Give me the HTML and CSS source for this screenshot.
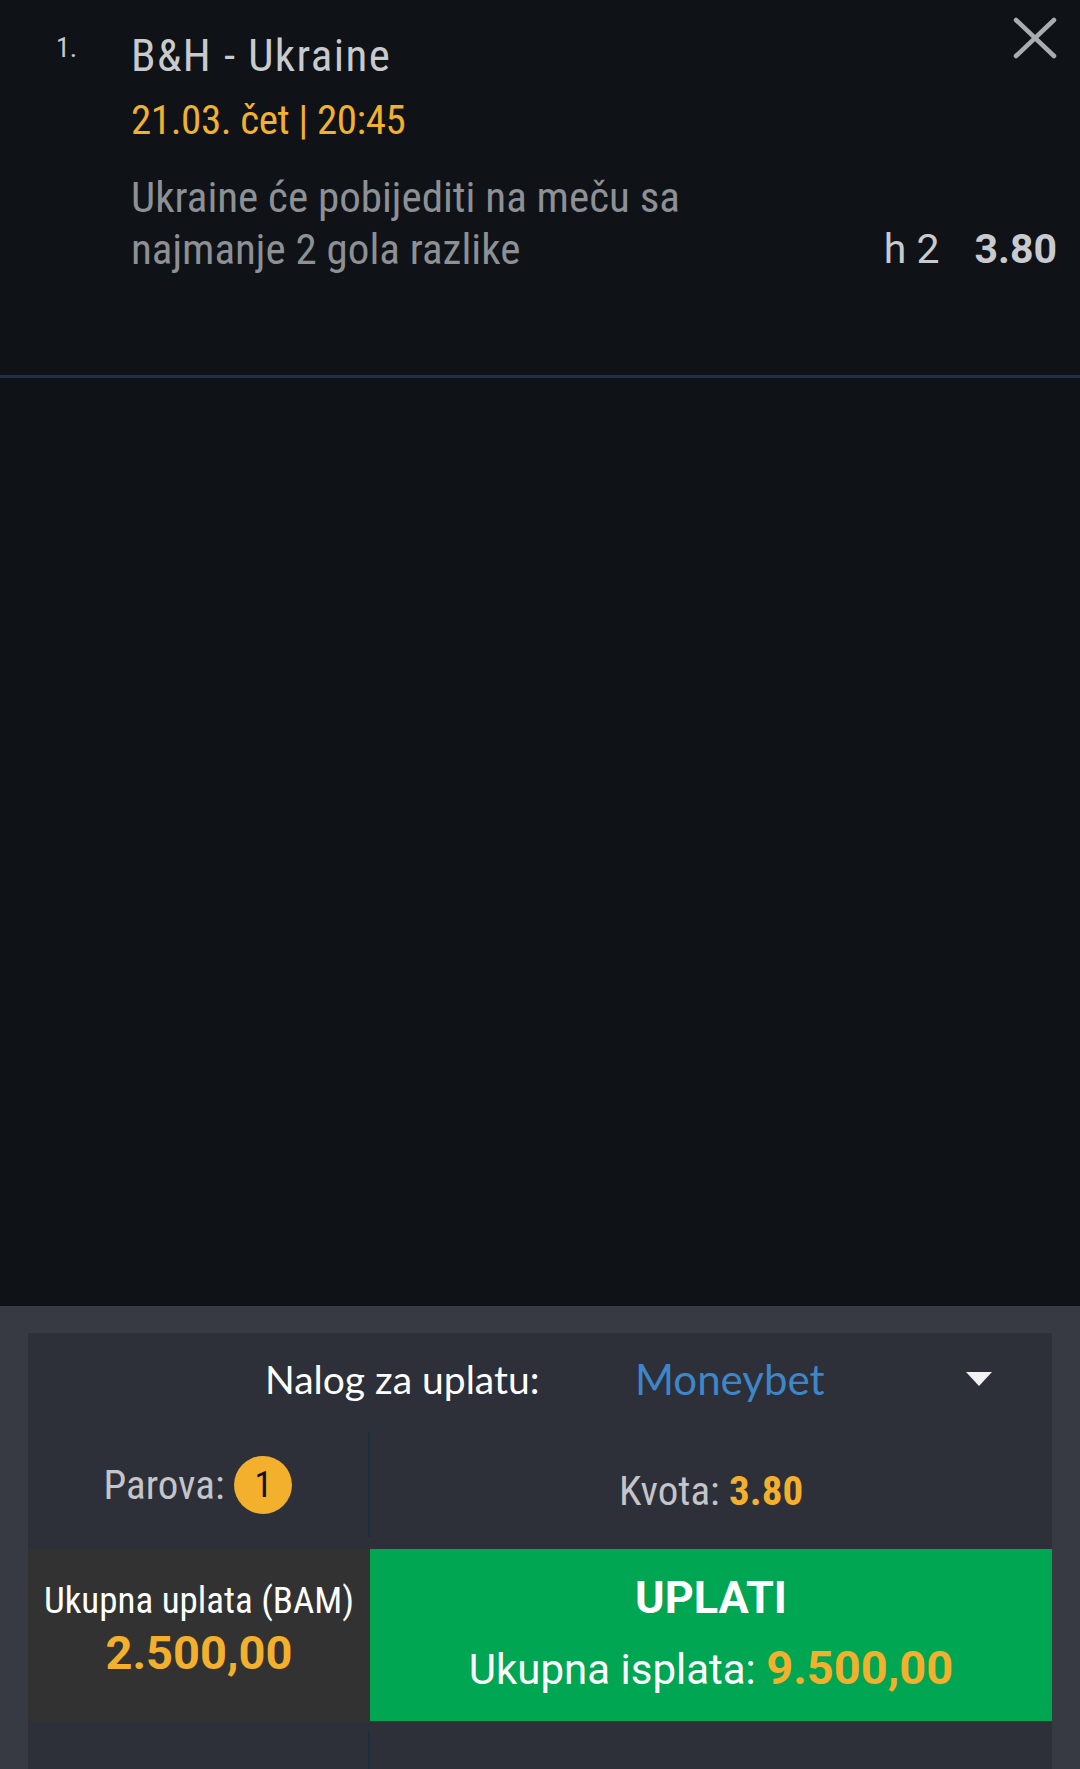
FILE: index.html
```html
<!DOCTYPE html>
<html lang="bs">
<head>
    <meta charset="UTF-8" />
    <meta name="viewport" content="width=device-width, initial-scale=1.0"/>
    <title>Listić</title>
    <link rel="stylesheet" href="styles.css">
</head>
<body>

    <!-- Selected match -->
    <div class="bet">
        <div class="bet-num">1.</div>
        <div class="bet-info">
            <div class="bet-head">
                <div class="bet-title">B&amp;H - Ukraine</div>
                <button class="bet-close" aria-label="Ukloni">
                    <svg width="44" height="42" viewBox="0 0 44 42">
                        <path d="M3 3 L41 39 M41 3 L3 39" stroke="#a9acb0" stroke-width="4.5" stroke-linecap="round"/>
                    </svg>
                </button>
            </div>
            <div class="bet-date">21.03. čet | 20:45</div>
            <div class="bet-row">
                <div class="bet-desc">Ukraine će pobijediti na meču sa najmanje 2 gola razlike</div>
                <div class="bet-odd"><span class="bet-type">h 2</span><span class="bet-value">3.80</span></div>
            </div>
        </div>
    </div>

    <div class="spacer"></div>

    <!-- Ticket panel -->
    <div class="slip">
        <div class="card">
            <div class="account">
                <span class="account-label">Nalog za uplatu:</span>
                <span class="account-value">Moneybet</span>
                <span class="account-arrow"></span>
            </div>

            <div class="stats">
                <div class="cell">Parova: <span class="badge">1</span></div>
                <div class="cell">Kvota:&nbsp;<b class="yellow">3.80</b></div>
            </div>

            <div class="pay">
                <div class="stake">
                    <div class="stake-label">Ukupna uplata (BAM)</div>
                    <div class="stake-value">2.500,00</div>
                </div>
                <button class="submit">
                    <span class="submit-title">UPLATI</span>
                    <span class="submit-win">Ukupna isplata: <b class="amount">9.500,00</b></span>
                </button>
            </div>

            <div class="stats stats-empty">
                <div class="cell"></div>
                <div class="cell"></div>
            </div>
        </div>
    </div>

</body>
</html>
```

FILE: styles.css
```css
:root {
    --bg: #0f1317;
    --panel: #373a43;
    --card: #2d3039;
    --line: #1b2d40;
    --yellow: #f2b02c;
    --green: #00a651;
    --narrow: "Roboto Condensed", Roboto, "Liberation Sans", sans-serif;
    --wide: Roboto, "Liberation Sans", sans-serif;
}

* {
    box-sizing: border-box;
}

body {
    margin: 0;
    height: 1769px;
    overflow: hidden;
    background: var(--bg);
    font-family: var(--narrow);
    font-stretch: 80%;
    display: flex;
    flex-direction: column;
}

/* match row */
.bet {
    display: flex;
    height: 378px;
    padding: 17px 23px 0 56px;
    border-bottom: 3px solid #18324a;
    color: #c8cacd;
}

.bet-num {
    width: 75px;
    font-size: 28px;
    padding-top: 14px;
}

.bet-info {
    flex: 1;
}

.bet-head {
    display: flex;
    justify-content: space-between;
    align-items: flex-start;
}

.bet-title {
    font-size: 45px;
    line-height: 58px;
    margin-top: 10px;
    letter-spacing: 1.4px;
}

.bet-date {
    color: var(--yellow);
    font-size: 41px;
    line-height: 64px;
    margin-top: 3px;
    letter-spacing: -0.4px;
}

.bet-row {
    display: flex;
    align-items: flex-end;
    margin-top: 19px;
}

.bet-desc {
    color: #8d9094;
    font-size: 43px;
    line-height: 52px;
    max-width: 580px;
}

.bet-odd {
    margin-left: auto;
    font-family: var(--wide);
    font-stretch: normal;
    font-size: 41px;
    line-height: 52px;
}

.bet-type {
    margin-right: 35px;
}

.bet-value {
    font-weight: bold;
}

.bet-close {
    background: none;
    border: none;
    padding: 0;
    width: 44px;
    height: 42px;
}

.spacer {
    flex: 1;
}

/* ticket */
.slip {
    height: 463px;
    background: var(--panel);
    padding: 27px 28px 0;
}

.card {
    height: 100%;
    background: var(--card);
}

.account {
    display: flex;
    align-items: center;
    height: 99px;
    padding-left: 237px;
    padding-bottom: 8px;
    font-family: Lato, "Open Sans", sans-serif;
    font-stretch: normal;
}

.account-label {
    color: #fff;
    font-size: 39px;
    width: 370px;
}

.account-value {
    color: #3e86c8;
    font-size: 42px;
    width: 331px;
}

.account-arrow {
    width: 0;
    height: 0;
    border-left: 13px solid transparent;
    border-right: 13px solid transparent;
    border-top: 14px solid #f2f2f2;
}

.stats {
    display: grid;
    grid-template-columns: 342px 1fr;
    height: 117px;
}

.cell {
    display: flex;
    align-items: center;
    justify-content: center;
    color: #c3c5c9;
    font-size: 41px;
}

.cell:first-child {
    border-right: 2px solid var(--line);
    margin: 0 0 12px;
}

.badge {
    display: inline-flex;
    align-items: center;
    justify-content: center;
    width: 58px;
    height: 58px;
    margin-left: 10px;
    border-radius: 50%;
    background: var(--yellow);
    color: #111;
    font-size: 36px;
}

.yellow {
    color: var(--yellow);
}

.pay {
    display: grid;
    grid-template-columns: 342px 1fr;
    height: 172px;
}

.stake {
    background: #323232;
    color: #fff;
    text-align: center;
    padding-top: 30px;
    white-space: nowrap;
}

.stake-label {
    font-size: 37px;
}

.stake-value {
    color: var(--yellow);
    font-family: var(--wide);
    font-stretch: normal;
    font-size: 47px;
    font-weight: bold;
    margin-top: 3px;
}

.submit {
    display: flex;
    flex-direction: column;
    align-items: center;
    border: none;
    background: var(--green);
    color: #fff;
    font-family: var(--wide);
    font-stretch: normal;
    padding-top: 22px;
    white-space: nowrap;
}

.submit-title {
    font-size: 45px;
    font-weight: bold;
}

.submit-win {
    font-size: 42px;
    margin-top: 16px;
}

.amount {
    color: var(--yellow);
    font-size: 47px;
}

.stats-empty .cell:first-child {
    margin: 11px 0 0;
}
```
